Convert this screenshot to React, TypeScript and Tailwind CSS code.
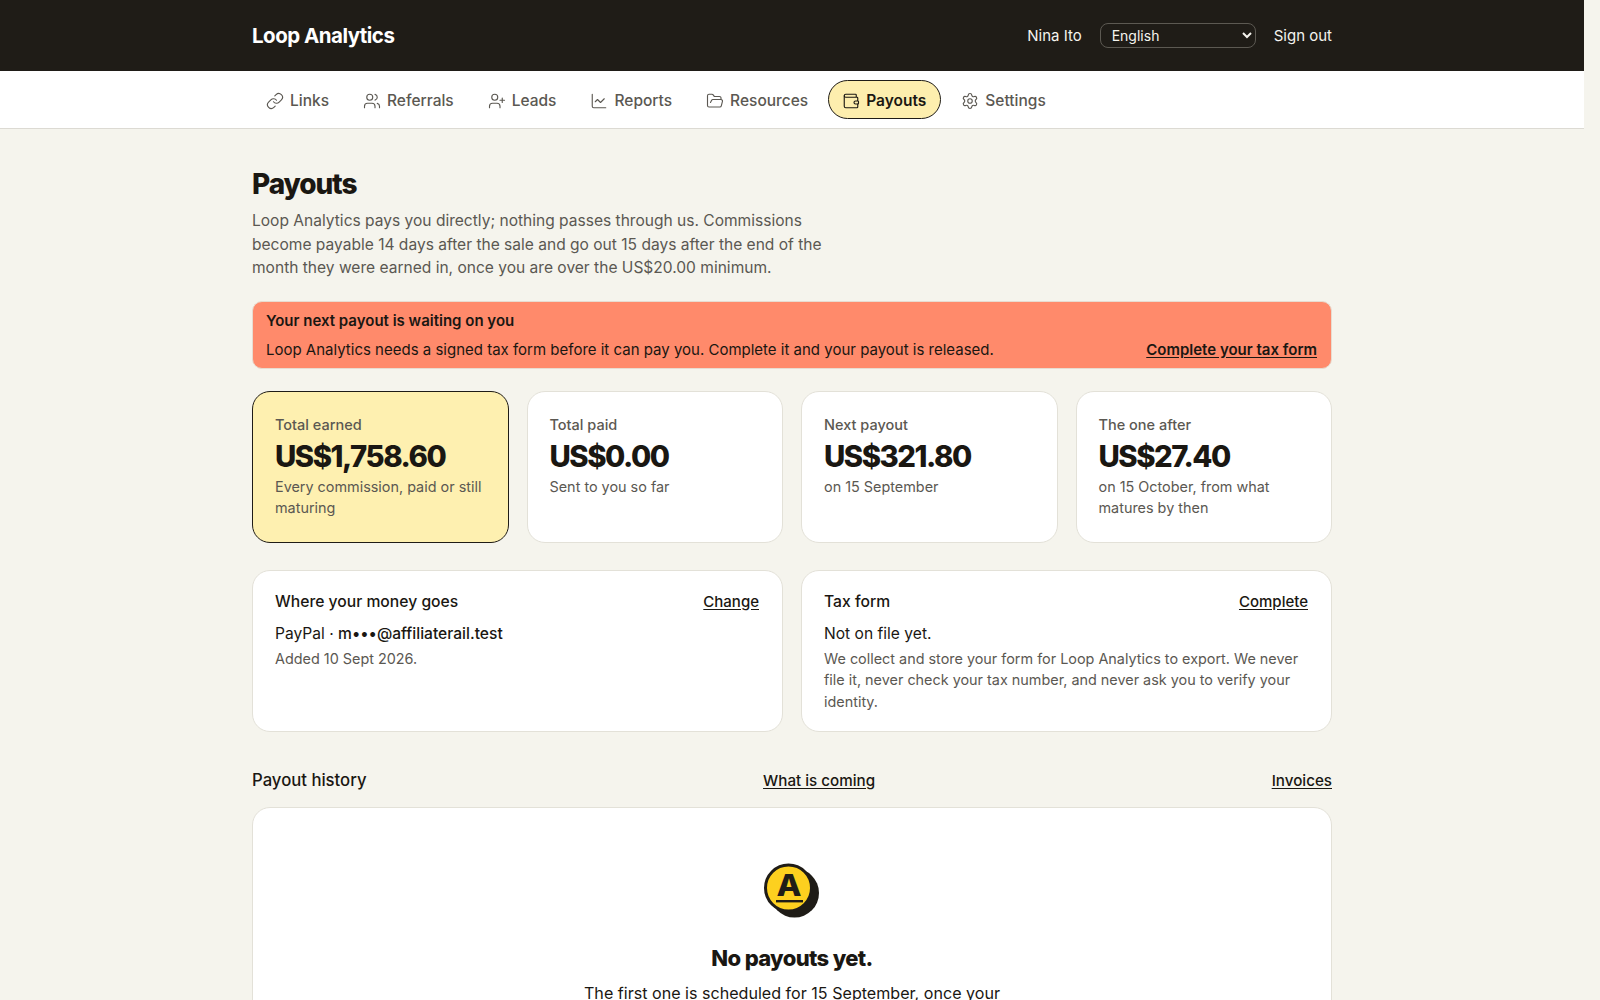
import { ChartLine, FolderOpen, Link, Settings, UserPlus, Users, Wallet } from "lucide-react";

const tabs = [
  { label: "Links", icon: Link },
  { label: "Referrals", icon: Users },
  { label: "Leads", icon: UserPlus },
  { label: "Reports", icon: ChartLine },
  { label: "Resources", icon: FolderOpen },
  { label: "Payouts", icon: Wallet, active: true },
  { label: "Settings", icon: Settings },
];

const stats = [
  { label: "Total earned", value: "US$1,758.60", note: "Every commission, paid or still maturing", highlight: true },
  { label: "Total paid", value: "US$0.00", note: "Sent to you so far" },
  { label: "Next payout", value: "US$321.80", note: "on 15 September" },
  { label: "The one after", value: "US$27.40", note: "on 15 October, from what matures by then" },
];

function CoinLogo() {
  return (
    <svg width="56" height="56" viewBox="0 0 56 56" className="mr-[2px] block">
      <circle cx="31.5" cy="30" r="24.5" fill="#1f1c17" />
      <circle cx="25.5" cy="25" r="23" fill="#fdd01f" stroke="#1f1c17" strokeWidth="3" />
      <text
        x="26"
        y="33"
        textAnchor="middle"
        fontFamily="Inter, sans-serif"
        fontWeight="800"
        fontSize="30"
        textLength="25"
        lengthAdjust="spacingAndGlyphs"
        fill="#1f1c17"
      >
        A
      </text>
      <rect x="13" y="37" width="27" height="2.4" fill="#1f1c17" />
    </svg>
  );
}

export default function App() {
  return (
    <div className="h-screen overflow-hidden bg-[#f5f4ed] pr-4 font-['Inter',sans-serif] text-[#1a1712]">
      <header className="bg-[#1f1c17] text-white">
        <div className="mx-auto flex h-[71px] max-w-[1080px] items-center justify-between">
          <span className="pt-[2px] text-[20.5px] font-bold tracking-[-0.025em]">Loop Analytics</span>
          <div className="flex items-center gap-[18px] text-[15px] text-[#f5f4ee]">
            <span className="pt-[2px]">Nina Ito</span>
            <select className="h-[25px] w-[156px] rounded-lg border border-[#5c5952] bg-[#1f1c17] pl-[7px] pr-1 text-[14px] text-[#f5f4ee] [color-scheme:dark]">
              <option>English</option>
            </select>
            <span className="pt-[2px]">Sign out</span>
          </div>
        </div>
      </header>

      <nav className="border-b border-[#dcdad3] bg-white">
        <div className="mx-auto flex h-[57px] max-w-[1080px] items-center gap-[6px]">
          {tabs.map((tab) => (
            <a
              key={tab.label}
              className={
                tab.active
                  ? "flex h-[39px] items-center gap-[6px] rounded-full border border-[#1f1c17] bg-[#fdeeae] pt-[2px] pl-[13px] pr-[14px] text-[15.5px] font-semibold text-[#1a1712]"
                  : "flex h-[39px] items-center gap-[6px] rounded-full border border-transparent pt-[2px] pl-[13px] pr-[13px] text-[15.5px] font-medium text-[#5b5852]"
              }
            >
              <tab.icon size={18} strokeWidth={1.5} />
              {tab.label}
            </a>
          ))}
        </div>
      </nav>

      <main className="mx-auto max-w-[1080px] pt-[37px]">
        <h1 className="text-[28px] leading-[36px] font-extrabold tracking-[-0.04em]">Payouts</h1>
        <p className="mt-[7px] w-[590px] text-[15.55px] leading-[23.5px] text-[#5b5852]">
          Loop Analytics pays you directly; nothing passes through us. Commissions become payable 14 days after the sale and go out 15 days after the end of the month they were earned in, once you are over the US$20.00 minimum.
        </p>

        <div className="mt-[21px] rounded-[10px] border border-[#e8dcd0] bg-[#ff8a6b] pt-[8px] pr-[14px] pb-[7px] pl-[13px]">
          <div className="text-[15px] leading-[22px] font-semibold">Your next payout is waiting on you</div>
          <div className="mt-[7px] flex items-center justify-between text-[15px] leading-[22px]">
            <span>Loop Analytics needs a signed tax form before it can pay you. Complete it and your payout is released.</span>
            <a className="font-semibold underline underline-offset-2">Complete your tax form</a>
          </div>
        </div>

        <div className="mt-[22px] grid grid-cols-4 gap-[18px]">
          {stats.map((s) => (
            <div
              key={s.label}
              className={
                s.highlight
                  ? "h-[152px] rounded-[18px] border border-[#1f1c17] bg-[#fef0b0] px-[22px] pt-[22px]"
                  : "h-[152px] rounded-[18px] border border-[#e3e1d8] bg-white px-[22px] pt-[22px]"
              }
            >
              <div className="text-[14.5px] leading-[21px] font-medium text-[#5b5852]">{s.label}</div>
              <div className="mt-[4px] text-[29.3px] leading-[36px] font-extrabold tracking-[-0.05em]">{s.value}</div>
              <div className="mt-[1px] text-[14.4px] leading-[21.5px] text-[#5b5852]">{s.note}</div>
            </div>
          ))}
        </div>

        <div className="mt-[27px] grid h-[162px] grid-cols-2 gap-[18px]">
          <section className="rounded-[18px] border border-[#e3e1d8] bg-white pt-[19px] pr-[23px] pl-[22px]">
            <div className="flex items-center justify-between leading-[24px] font-medium">
              <h2 className="text-[15.7px]">Where your money goes</h2>
              <a className="text-[15px] underline underline-offset-2">Change</a>
            </div>
            <p className="mt-[8px] text-[15.6px] leading-[23px]">
              PayPal · <span className="font-medium">m•••@affiliaterail.test</span>
            </p>
            <p className="mt-[3px] text-[14.4px] leading-[21.5px] text-[#5b5852]">Added 10 Sept 2026.</p>
          </section>
          <section className="rounded-[18px] border border-[#e3e1d8] bg-white pt-[19px] pr-[23px] pl-[22px]">
            <div className="flex items-center justify-between leading-[24px] font-medium">
              <h2 className="text-[15.7px]">Tax form</h2>
              <a className="text-[15px] underline underline-offset-2">Complete</a>
            </div>
            <p className="mt-[8px] text-[15.6px] leading-[23px]">Not on file yet.</p>
            <p className="mt-[3px] text-[14.4px] leading-[21.5px] text-[#5b5852]">
              We collect and store your form for Loop Analytics to export. We never file it, never check your tax number, and never ask you to verify your identity.
            </p>
          </section>
        </div>

        <div className="mt-[36px] flex h-[24px] items-center justify-between leading-[24px] font-medium">
          <h2 className="text-[16.7px]">Payout history</h2>
          <a className="pt-[2px] text-[15.2px] underline underline-offset-2">What is coming</a>
          <a className="pt-[2px] text-[15.2px] underline underline-offset-2">Invoices</a>
        </div>

        <section className="mt-[15px] flex flex-col items-center rounded-t-[18px] border border-[#e3e1d8] bg-white pt-[55px] pb-10">
          <CoinLogo />
          <h3 className="mt-[24px] text-[22px] leading-[30px] font-extrabold tracking-[-0.03em]">No payouts yet.</h3>
          <p className="mt-[8px] text-[16.1px] leading-[24px]">The first one is scheduled for 15 September, once your</p>
        </section>
      </main>
    </div>
  );
}
